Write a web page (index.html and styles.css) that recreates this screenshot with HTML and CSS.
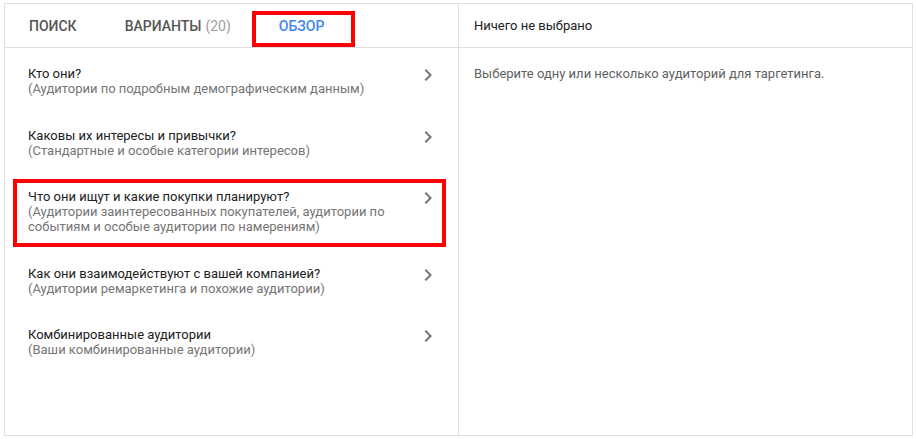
FILE: index.html
```html
<!DOCTYPE html>
<html lang="ru">
<head>
<meta charset="utf-8">
<link rel="stylesheet" href="styles.css">
</head>
<body>
<div class="panel">
  <div class="left">
    <div class="tabs">
      <div class="tab">Поиск</div>
      <div class="tab">Варианты <span class="count">(20)</span></div>
      <div class="tab active">Обзор<span class="mark mark-tab"></span></div>
    </div>
    <div class="list">
      <div class="item">
        <div class="texts">
          <div class="title">Кто они?</div>
          <div class="sub">(Аудитории по подробным демографическим данным)</div>
        </div>
        <svg class="chev" viewBox="0 0 24 24" width="24" height="24"><path d="M10 6L8.59 7.41 13.17 12l-4.58 4.59L10 18l6-6z"/></svg>
      </div>
      <div class="item">
        <div class="texts">
          <div class="title">Каковы их интересы и привычки?</div>
          <div class="sub">(Стандартные и особые категории интересов)</div>
        </div>
        <svg class="chev" viewBox="0 0 24 24" width="24" height="24"><path d="M10 6L8.59 7.41 13.17 12l-4.58 4.59L10 18l6-6z"/></svg>
      </div>
      <div class="item">
        <div class="texts">
          <div class="title">Что они ищут и какие покупки планируют?</div>
          <div class="sub">(Аудитории заинтересованных покупателей, аудитории по событиям и особые аудитории по намерениям)</div>
        </div>
        <svg class="chev" viewBox="0 0 24 24" width="24" height="24"><path d="M10 6L8.59 7.41 13.17 12l-4.58 4.59L10 18l6-6z"/></svg>
        <span class="mark mark-item"></span>
      </div>
      <div class="item">
        <div class="texts">
          <div class="title">Как они взаимодействуют с вашей компанией?</div>
          <div class="sub">(Аудитории ремаркетинга и похожие аудитории)</div>
        </div>
        <svg class="chev" viewBox="0 0 24 24" width="24" height="24"><path d="M10 6L8.59 7.41 13.17 12l-4.58 4.59L10 18l6-6z"/></svg>
      </div>
      <div class="item">
        <div class="texts">
          <div class="title">Комбинированные аудитории</div>
          <div class="sub">(Ваши комбинированные аудитории)</div>
        </div>
        <svg class="chev" viewBox="0 0 24 24" width="24" height="24"><path d="M10 6L8.59 7.41 13.17 12l-4.58 4.59L10 18l6-6z"/></svg>
      </div>
    </div>
  </div>
  <div class="right">
    <div class="right-head">Ничего не выбрано</div>
    <div class="right-body">Выберите одну или несколько аудиторий для таргетинга.</div>
  </div>
</div>
</body>
</html>
```

FILE: styles.css
```css
* { box-sizing: border-box; }
html, body { margin: 0; padding: 0; background: #fff; }
body {
  font-family: Roboto, "Liberation Sans", Arial, sans-serif;
  font-size: 13px;
  color: #212121;
}
.panel {
  margin: 3px 0 0 4px;
  width: 909px;
  height: 433px;
  border: 1px solid #e0e0e0;
  display: flex;
}
.left {
  width: 454px;
  border-right: 1px solid #e0e0e0;
  display: flex;
  flex-direction: column;
}
.tabs {
  height: 44px;
  border-bottom: 1px solid #e0e0e0;
  display: flex;
  align-items: stretch;
}
.tab {
  position: relative;
  padding: 0 24px;
  display: flex;
  align-items: center;
  font-weight: 500;
  font-size: 14px;
  text-transform: uppercase;
  color: #555;
}
.tab .count {
  font-weight: 400;
  color: #9e9e9e;
  margin-left: 4px;
}
.tab.active { color: #4285f4; }
.mark {
  position: absolute;
  border: 4px solid #f00;
  pointer-events: none;
}
.mark-tab { left: -3px; right: -7px; top: 7px; bottom: 0; }
.list { padding-top: 1px; }
.item {
  position: relative;
  display: flex;
  align-items: flex-start;
  padding: 17px 18px 14.5px 23px;
}
.texts { flex: 1; line-height: 15px; padding-right: 30px; }
.title { color: #212121; }
.sub { color: #757575; }
.chev { fill: #757575; flex: none; margin-top: -3px; }
.mark-item { left: 8px; top: 7px; bottom: 2px; width: 433px; }
.right { flex: 1; display: flex; flex-direction: column; }
.right-head {
  height: 44px;
  border-bottom: 1px solid #e0e0e0;
  display: flex;
  align-items: center;
  padding-left: 15px;
  color: #212121;
}
.right-body {
  padding: 18px 15px;
  line-height: 15px;
  color: #5f5f5f;
}
```
